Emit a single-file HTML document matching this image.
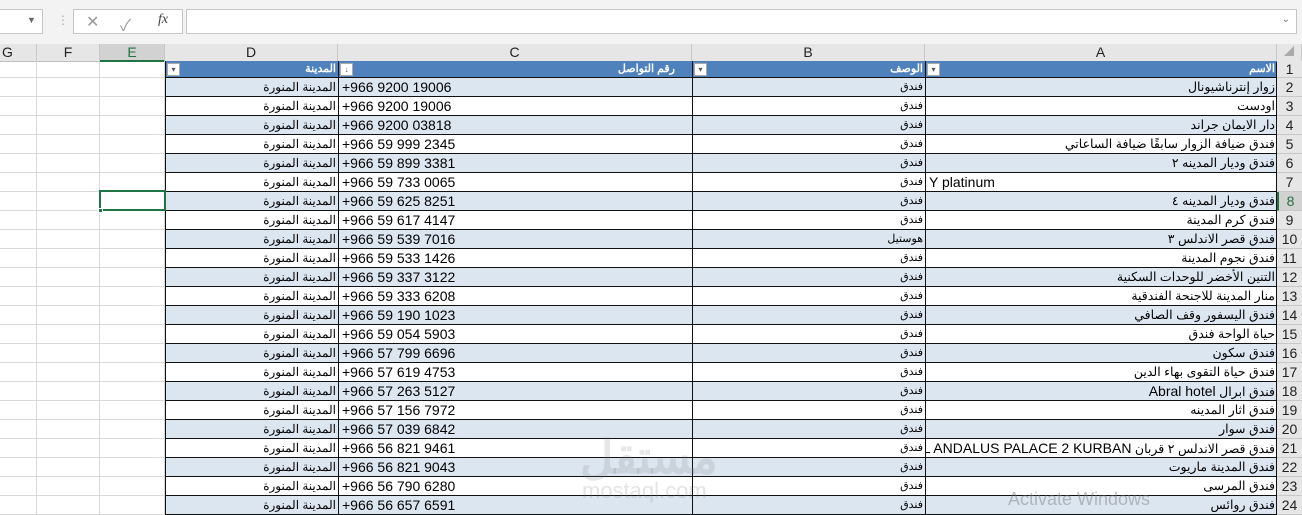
<!DOCTYPE html>
<html><head><meta charset="utf-8"><style>
*{box-sizing:border-box;margin:0;padding:0}
body{width:1302px;height:514px;overflow:hidden;background:#fff;position:relative;font-family:"Liberation Sans","Noto Sans CJK SC",sans-serif;font-size:14px;color:#000}
.a{position:absolute}
.top{left:0;top:0;width:1302px;height:44px;background:#f3f3f3}
.box{background:#fff;border:1px solid #c6c6c6}
.ch{top:44px;height:18px;background:#e6e6e6;border-right:1px solid #c8c8c8;border-bottom:1px solid #c0c0c0;text-align:center;font-size:14px;line-height:17px;color:#222}
.r{position:absolute;left:0;width:1302px;height:19px}
.c{position:absolute;top:0;height:100%;border-bottom:1px solid #111;border-left:1px solid #111;line-height:18px;white-space:nowrap;overflow:hidden;padding:0 3px;font-size:14px}
.d{left:165px;width:174px;text-align:right;direction:rtl;font-size:12px}
.cc{left:338px;width:355px;text-align:left}
.b{left:692px;width:234px;text-align:right;direction:rtl;font-size:11px}
.aa{left:925px;width:353px;text-align:right;direction:rtl;font-size:12.5px}
.g{position:absolute;top:0;height:100%;border-right:1px solid #d9d9d9;border-bottom:1px solid #d9d9d9}
.rh{position:absolute;left:1277px;width:25px;top:0;height:100%;background:#e6e6e6;border-bottom:1px solid #c8c8c8;text-align:center;line-height:19px;font-size:14px;color:#222}
.bl .c{background:#dce6f1}
.hd .c{background:#4f81bd;color:#fff;font-weight:bold;font-size:11px;line-height:17px}
.dd{position:absolute;top:2px;width:13px;height:13px;background:#fff;border:1px solid #aaa;font-size:8px;line-height:11px;text-align:center;color:#555}
</style></head><body>
<div class="a top"></div>
<div class="a box" style="left:-2px;top:9px;width:45px;height:25px"><span style="position:absolute;left:28px;top:5px;font-size:9px;color:#666">▼</span></div>
<div class="a" style="left:57px;top:13px;color:#aaa;font-size:12px">⋮</div>
<div class="a box" style="left:73px;top:9px;width:110px;height:25px;color:#999;font-size:16px"><span style="position:absolute;left:12px;top:2px">✕</span><span style="position:absolute;left:46px;top:2px">✓</span><span style="position:absolute;left:84px;top:2px;font-family:'Liberation Serif',serif;font-style:italic;color:#444;font-size:14px">fx</span></div>
<div class="a box" style="left:186px;top:9px;width:1111px;height:25px"><span style="position:absolute;right:6px;top:4px;font-size:10px;color:#777">⌄</span></div>

<div class="a ch" style="left:0;width:37px;text-align:left;padding-left:2px">G</div>
<div class="a ch" style="left:37px;width:63px">F</div>
<div class="a ch" style="left:100px;width:65px;background:#d2d2d2;border-bottom:2px solid #217346;color:#217346">E</div>
<div class="a ch" style="left:165px;width:173px">D</div>
<div class="a ch" style="left:338px;width:354px">C</div>
<div class="a ch" style="left:692px;width:233px">B</div>
<div class="a ch" style="left:925px;width:352px">A</div>
<div class="a ch" style="left:1277px;width:25px;color:#aaa;font-size:10px">◢</div>

<div class="r hd" style="top:61px;height:17px"><div class="g" style="left:0;width:37px"></div><div class="g" style="left:37px;width:63px"></div><div class="g" style="left:100px;width:65px"></div>
<div class="c d" style="font-size:11px">المدينة</div>
<div class="c cc"></div><div class="a" style="left:355px;top:0;width:320px;text-align:right;direction:rtl;color:#fff;font-weight:bold;font-size:11px;line-height:17px">رقم التواصل</div>
<div class="c b">الوصف</div>
<div class="c aa" style="font-size:11px">الاسم</div>
<div class="dd" style="left:167px">▾</div><div class="dd" style="left:340px">↓</div><div class="dd" style="left:694px">▾</div><div class="dd" style="left:927px">▾</div>
<div class="rh" style="line-height:17px">1</div></div>

<div class="r bl" style="top:78px"><div class="g" style="left:0;width:37px"></div><div class="g" style="left:37px;width:63px"></div><div class="g" style="left:100px;width:65px"></div><div class="c d">المدينة المنورة</div><div class="c cc">+966 9200 19006</div><div class="c b">فندق</div><div class="c aa">زوار إنترناشيونال</div><div class="rh">2</div></div>
<div class="r" style="top:97px"><div class="g" style="left:0;width:37px"></div><div class="g" style="left:37px;width:63px"></div><div class="g" style="left:100px;width:65px"></div><div class="c d">المدينة المنورة</div><div class="c cc">+966 9200 19006</div><div class="c b">فندق</div><div class="c aa">اودست</div><div class="rh">3</div></div>
<div class="r bl" style="top:116px"><div class="g" style="left:0;width:37px"></div><div class="g" style="left:37px;width:63px"></div><div class="g" style="left:100px;width:65px"></div><div class="c d">المدينة المنورة</div><div class="c cc">+966 9200 03818</div><div class="c b">فندق</div><div class="c aa">دار الايمان جراند</div><div class="rh">4</div></div>
<div class="r" style="top:135px"><div class="g" style="left:0;width:37px"></div><div class="g" style="left:37px;width:63px"></div><div class="g" style="left:100px;width:65px"></div><div class="c d">المدينة المنورة</div><div class="c cc">+966 59 999 2345</div><div class="c b">فندق</div><div class="c aa">فندق ضيافة الزوار سابقًا ضيافة الساعاتي</div><div class="rh">5</div></div>
<div class="r bl" style="top:154px"><div class="g" style="left:0;width:37px"></div><div class="g" style="left:37px;width:63px"></div><div class="g" style="left:100px;width:65px"></div><div class="c d">المدينة المنورة</div><div class="c cc">+966 59 899 3381</div><div class="c b">فندق</div><div class="c aa">فندق وديار المدينه ٢</div><div class="rh">6</div></div>
<div class="r" style="top:173px"><div class="g" style="left:0;width:37px"></div><div class="g" style="left:37px;width:63px"></div><div class="g" style="left:100px;width:65px"></div><div class="c d">المدينة المنورة</div><div class="c cc">+966 59 733 0065</div><div class="c b">فندق</div><div class="c aa" style="direction:ltr;text-align:left;font-size:14px">Y platinum</div><div class="rh">7</div></div>
<div class="r bl" style="top:192px"><div class="g" style="left:0;width:37px"></div><div class="g" style="left:37px;width:63px"></div><div class="g" style="left:100px;width:65px"></div><div class="c d">المدينة المنورة</div><div class="c cc">+966 59 625 8251</div><div class="c b">فندق</div><div class="c aa">فندق وديار المدينه ٤</div><div class="rh" style="background:#d2d2d2;border-left:2px solid #217346;color:#217346">8</div></div>
<div class="r" style="top:211px"><div class="g" style="left:0;width:37px"></div><div class="g" style="left:37px;width:63px"></div><div class="g" style="left:100px;width:65px"></div><div class="c d">المدينة المنورة</div><div class="c cc">+966 59 617 4147</div><div class="c b">فندق</div><div class="c aa">فندق كرم المدينة</div><div class="rh">9</div></div>
<div class="r bl" style="top:230px"><div class="g" style="left:0;width:37px"></div><div class="g" style="left:37px;width:63px"></div><div class="g" style="left:100px;width:65px"></div><div class="c d">المدينة المنورة</div><div class="c cc">+966 59 539 7016</div><div class="c b">هوستيل</div><div class="c aa">فندق قصر الاندلس ٣</div><div class="rh">10</div></div>
<div class="r" style="top:249px"><div class="g" style="left:0;width:37px"></div><div class="g" style="left:37px;width:63px"></div><div class="g" style="left:100px;width:65px"></div><div class="c d">المدينة المنورة</div><div class="c cc">+966 59 533 1426</div><div class="c b">فندق</div><div class="c aa">فندق نجوم المدينة</div><div class="rh">11</div></div>
<div class="r bl" style="top:268px"><div class="g" style="left:0;width:37px"></div><div class="g" style="left:37px;width:63px"></div><div class="g" style="left:100px;width:65px"></div><div class="c d">المدينة المنورة</div><div class="c cc">+966 59 337 3122</div><div class="c b">فندق</div><div class="c aa">التنين الأخضر للوحدات السكنية</div><div class="rh">12</div></div>
<div class="r" style="top:287px"><div class="g" style="left:0;width:37px"></div><div class="g" style="left:37px;width:63px"></div><div class="g" style="left:100px;width:65px"></div><div class="c d">المدينة المنورة</div><div class="c cc">+966 59 333 6208</div><div class="c b">فندق</div><div class="c aa">منار المدينة للاجنحة الفندقية</div><div class="rh">13</div></div>
<div class="r bl" style="top:306px"><div class="g" style="left:0;width:37px"></div><div class="g" style="left:37px;width:63px"></div><div class="g" style="left:100px;width:65px"></div><div class="c d">المدينة المنورة</div><div class="c cc">+966 59 190 1023</div><div class="c b">فندق</div><div class="c aa">فندق اليسفور وقف الصافي</div><div class="rh">14</div></div>
<div class="r" style="top:325px"><div class="g" style="left:0;width:37px"></div><div class="g" style="left:37px;width:63px"></div><div class="g" style="left:100px;width:65px"></div><div class="c d">المدينة المنورة</div><div class="c cc">+966 59 054 5903</div><div class="c b">فندق</div><div class="c aa">حياة الواحة فندق</div><div class="rh">15</div></div>
<div class="r bl" style="top:344px"><div class="g" style="left:0;width:37px"></div><div class="g" style="left:37px;width:63px"></div><div class="g" style="left:100px;width:65px"></div><div class="c d">المدينة المنورة</div><div class="c cc">+966 57 799 6696</div><div class="c b">فندق</div><div class="c aa">فندق سكون</div><div class="rh">16</div></div>
<div class="r" style="top:363px"><div class="g" style="left:0;width:37px"></div><div class="g" style="left:37px;width:63px"></div><div class="g" style="left:100px;width:65px"></div><div class="c d">المدينة المنورة</div><div class="c cc">+966 57 619 4753</div><div class="c b">فندق</div><div class="c aa">فندق حياة التقوى بهاء الدين</div><div class="rh">17</div></div>
<div class="r bl" style="top:382px"><div class="g" style="left:0;width:37px"></div><div class="g" style="left:37px;width:63px"></div><div class="g" style="left:100px;width:65px"></div><div class="c d">المدينة المنورة</div><div class="c cc">+966 57 263 5127</div><div class="c b">فندق</div><div class="c aa">فندق ابرال <span style="font-size:14px">Abral hotel</span></div><div class="rh">18</div></div>
<div class="r" style="top:401px"><div class="g" style="left:0;width:37px"></div><div class="g" style="left:37px;width:63px"></div><div class="g" style="left:100px;width:65px"></div><div class="c d">المدينة المنورة</div><div class="c cc">+966 57 156 7972</div><div class="c b">فندق</div><div class="c aa">فندق اثار المدينه</div><div class="rh">19</div></div>
<div class="r bl" style="top:420px"><div class="g" style="left:0;width:37px"></div><div class="g" style="left:37px;width:63px"></div><div class="g" style="left:100px;width:65px"></div><div class="c d">المدينة المنورة</div><div class="c cc">+966 57 039 6842</div><div class="c b">فندق</div><div class="c aa">فندق سوار</div><div class="rh">20</div></div>
<div class="r" style="top:439px"><div class="g" style="left:0;width:37px"></div><div class="g" style="left:37px;width:63px"></div><div class="g" style="left:100px;width:65px"></div><div class="c d">المدينة المنورة</div><div class="c cc">+966 56 821 9461</div><div class="c b">فندق</div><div class="c aa" style="text-align:left">فندق قصر الاندلس ٢ قربان <span style="font-size:14px">AL ANDALUS PALACE 2 KURBAN</span></div><div class="rh">21</div></div>
<div class="r bl" style="top:458px"><div class="g" style="left:0;width:37px"></div><div class="g" style="left:37px;width:63px"></div><div class="g" style="left:100px;width:65px"></div><div class="c d">المدينة المنورة</div><div class="c cc">+966 56 821 9043</div><div class="c b">فندق</div><div class="c aa">فندق المدينة ماريوت</div><div class="rh">22</div></div>
<div class="r" style="top:477px"><div class="g" style="left:0;width:37px"></div><div class="g" style="left:37px;width:63px"></div><div class="g" style="left:100px;width:65px"></div><div class="c d">المدينة المنورة</div><div class="c cc">+966 56 790 6280</div><div class="c b">فندق</div><div class="c aa">فندق المرسى</div><div class="rh">23</div></div>
<div class="r bl" style="top:496px"><div class="g" style="left:0;width:37px"></div><div class="g" style="left:37px;width:63px"></div><div class="g" style="left:100px;width:65px"></div><div class="c d">المدينة المنورة</div><div class="c cc">+966 56 657 6591</div><div class="c b">فندق</div><div class="c aa">فندق روائس</div><div class="rh">24</div></div>

<div class="a" style="left:99px;top:190px;width:67px;height:21px;border:2px solid #217346"></div>
<div class="a" style="left:98px;top:208px;width:5px;height:5px;background:#217346;border:1px solid #fff"></div>
<div class="a" style="left:1276px;top:62px;width:1px;height:452px;background:#111"></div>

<div class="a" style="left:580px;top:430px;font-size:46px;font-weight:bold;color:rgba(120,120,120,0.18);direction:rtl">مستقل</div>
<div class="a" style="left:582px;top:478px;font-size:22px;color:rgba(120,120,120,0.2)">mostaql.com</div>
<div class="a" style="left:1008px;top:489px;font-size:18px;color:rgba(120,120,120,0.45)">Activate Windows</div>
</body></html>
